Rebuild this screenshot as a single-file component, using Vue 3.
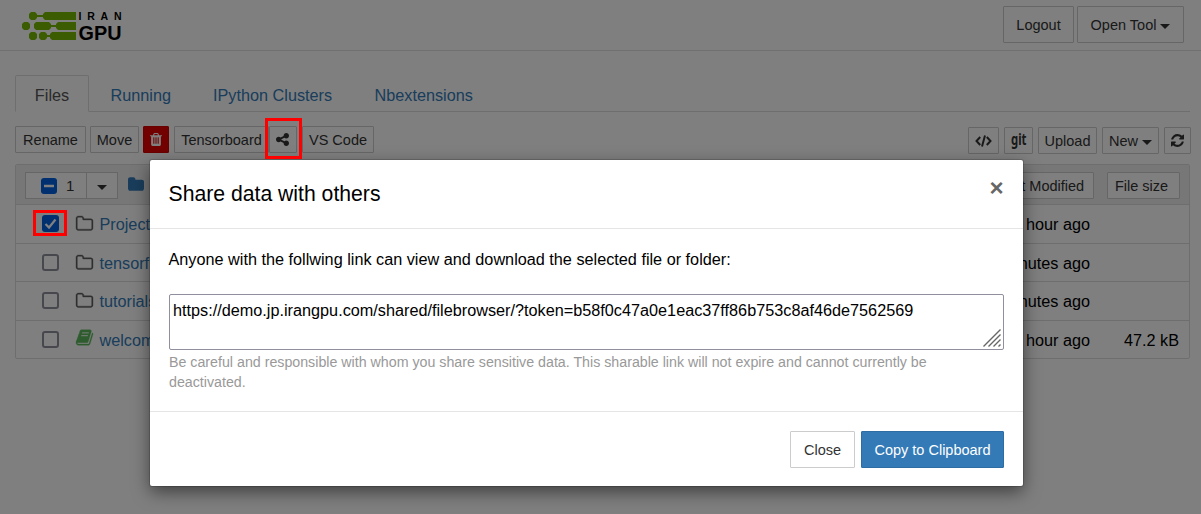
<script setup>
const tabs = ['Files', 'Running', 'IPython Clusters', 'Nbextensions']
const rows = [
  { name: 'Projects', type: 'folder', date: 'an hour ago', size: '', checked: true },
  { name: 'tensorflow', type: 'folder', date: '8 minutes ago', size: '', checked: false },
  { name: 'tutorials', type: 'folder', date: '8 minutes ago', size: '', checked: false },
  { name: 'welcome.ipynb', type: 'book', date: 'an hour ago', size: '47.2 kB', checked: false },
]
const link = 'https://demo.jp.irangpu.com/shared/filebrowser/?token=b58f0c47a0e1eac37ff86b753c8af46de7562569'
</script>

<template>
  <div class="page">
    <header class="top">
      <svg class="logo" width="100" height="30" viewBox="0 0 100 30">
        <g fill="#76b900">
          <path d="M9 0h4l2 2v4l-2 2H9L7 6V2zM23 0h31v8H23l-2-2V2zM2 10h4l2 2v4l-2 2H2l-2-2v-4zM14 10h13l2 2v4l-2 2H14l-2-2v-4zM36 10h18v8H36l-2-2v-4zM9 20h4l2 2v4l-2 2H9l-2-2v-4zM19 20h4l2 2v4l-2 2h-4l-2-2v-4zM30 20h24v8H30l-2-2v-4z" />
          <path d="M14 3h8v2h-8zM28 13h7v2h-7zM24 23h5v2h-5z" />
        </g>
        <text x="56.500" y="7.700" font-size="10.500" textLength="43" class="brand">IRAN</text>
        <text x="56.500" y="28" font-size="20.500" textLength="43" lengthAdjust="spacingAndGlyphs" class="brand">GPU</text>
      </svg>
      <div class="top-buttons">
        <button class="btn big logout">Logout</button>
        <button class="btn big tool">Open Tool<i class="caret"></i></button>
      </div>
    </header>

    <nav class="tabs">
      <a v-for="(t, i) in tabs" :key="t" :class="['tab', 't' + i]">{{ t }}</a>
    </nav>

    <div class="toolbar">
      <div class="left">
        <button class="btn rename">Rename</button>
        <button class="btn move">Move</button>
        <button class="btn danger">
          <svg width="12" height="13" viewBox="0 128 1408 1536"><path fill="#fff" d="M512 1376v-704q0-14-9-23t-23-9h-64q-14 0-23 9t-9 23v704q0 14 9 23t23 9h64q14 0 23-9t9-23zm256 0v-704q0-14-9-23t-23-9h-64q-14 0-23 9t-9 23v704q0 14 9 23t23 9h64q14 0 23-9t9-23zm256 0v-704q0-14-9-23t-23-9h-64q-14 0-23 9t-9 23v704q0 14 9 23t23 9h64q14 0 23-9t9-23zm-544-992h448l-48-117q-7-9-17-11h-317q-10 2-17 11zm928 32v64q0 14-9 23t-23 9h-96v948q0 83-47 143.500t-113 60.500h-832q-66 0-113-58.500t-47-141.500v-952h-96q-14 0-23-9t-9-23v-64q0-14 9-23t23-9h309l70-167q15-37 54-63t79-26h320q40 0 79 26t54 63l70 167h309q14 0 23 9t9 23z" /></svg>
        </button>
        <button class="btn tensor">Tensorboard</button>
        <button class="btn share">
          <svg width="13" height="13" viewBox="0 128 1536 1536"><path fill="#333" d="M1216 1024q133 0 226.500 93.500t93.500 226.500-93.500 226.500-226.500 93.500-226.500-93.500-93.500-226.500q0-12 2-34l-360-180q-92 86-218 86-133 0-226.500-93.500t-93.500-226.500 93.500-226.500 226.500-93.500q126 0 218 86l360-180q-2-22-2-34 0-133 93.500-226.500t226.500-93.500 226.500 93.500 93.500 226.500-93.500 226.500-226.500 93.500q-126 0-218-86l-360 180q2 22 2 34t-2 34l360 180q92-86 218-86z" /></svg>
        </button>
        <button class="btn vs">VS Code</button>
      </div>
      <div class="right">
        <button class="btn code">
          <svg width="17" height="14" viewBox="0 0 17 14" fill="none" stroke="#333" stroke-width="2"><path d="M5.200 3L1.500 7l3.700 4M11.800 3l3.700 4-3.700 4M10 1.500L7 12.500" /></svg>
        </button>
        <button class="btn git"><svg width="16" height="20" viewBox="0 0 16 20"><text x="0" y="14" textLength="15.500" lengthAdjust="spacingAndGlyphs">git</text></svg></button>
        <button class="btn upload">Upload</button>
        <button class="btn new">New<i class="caret"></i></button>
        <button class="btn refresh">
          <svg width="13" height="13" viewBox="0 128 1536 1536"><path fill="#333" d="M1511 1056q0 5-1 7-64 268-268 434.500t-478 166.500q-146 0-282.500-55t-243.500-157l-129 129q-19 19-45 19t-45-19-19-45v-448q0-26 19-45t45-19h448q26 0 45 19t19 45-19 45l-137 137q71 66 161 102t187 36q134 0 250-65t186-179q11-17 53-117 8-23 30-23h192q13 0 22.500 9.500t9.500 22.500zm25-800v448q0 26-19 45t-45 19h-448q-26 0-45-19t-19-45 19-45l138-138q-148-137-349-137-134 0-250 65t-186 179q-11 17-53 117-8 23-30 23h-199q-13 0-22.500-9.500t-9.500-22.500v-7q65-268 270-434.500t480-166.500q146 0 284 55.500t245 156.500l130-129q19-19 45-19t45 19 19 45z" /></svg>
        </button>
      </div>
    </div>

    <section class="list">
      <div class="list-head">
        <div class="select">
          <span class="select-main"><span class="check on"><svg width="16" height="16" viewBox="0 0 16 16"><path d="M3 8h10" stroke="#fff" stroke-width="2.500" /></svg></span><span>1</span></span>
          <span class="select-drop"><i class="caret"></i></span>
        </div>
        <svg class="crumb" width="16" height="14" viewBox="0 128 1664 1408"><path fill="#337ab7" d="M1664 608v704q0 92-66 158t-158 66h-1216q-92 0-158-66t-66-158v-960q0-92 66-158t158-66h320q92 0 158 66t66 158v32h672q92 0 158 66t66 158z" /></svg>
        <button class="btn modified">Last Modified</button>
        <button class="btn size">File size</button>
      </div>
      <div v-for="r in rows" :key="r.name" class="row">
        <span :class="['check', { on: r.checked }]">
          <svg v-if="r.checked" width="17" height="17" viewBox="0 0 17 17"><path d="M3.500 9l3.500 3.500 6.500-8" fill="none" stroke="#fff" stroke-width="2.200" /></svg>
        </span>
        <svg v-if="r.type === 'folder'" class="icon" width="17" height="14.500" viewBox="0 128 1664 1408"><path fill="#5e5e5e" stroke="#5e5e5e" stroke-width="35" d="M1536 1312v-704q0-40-28-68t-68-28h-704q-40 0-68-28t-28-68v-64q0-40-28-68t-68-28h-320q-40 0-68 28t-28 68v960q0 40 28 68t68 28h1216q40 0 68-28t28-68zm128-704v704q0 92-66 158t-158 66h-1216q-92 0-158-66t-66-158v-960q0-92 66-158t158-66h320q92 0 158 66t66 158v32h672q92 0 158 66t66 158z" /></svg>
        <svg v-else class="icon book" width="17" height="17" viewBox="0 128 1664 1536"><path fill="#5cb85c" stroke="#5cb85c" stroke-width="30" d="M1639 478q40 57 18 129l-275 906q-19 64-76.500 107.500t-122.500 43.500h-923q-77 0-148.500-53.500t-99.500-131.500q-24-67-2-127 0-4 3-27t4-37q1-8-3-21.500t-3-19.500q2-11 8-21t16.500-23.500 16.500-23.500q23-38 45-91.500t30-91.500q3-10 .5-30t-.5-28q3-11 17-28t17-23q21-36 42-92t25-90q1-9-2.500-32t.5-28q4-13 22-30.500t22-22.500q19-26 42.500-84.500t27.500-96.500q1-8-3-25.500t-2-26.500q2-8 9-18t18-23 17-21q8-12 16.500-30.500t15-35 16-36 19.500-32 26.500-23.500 36-11.500 47.500 5.500l-1 3q38-9 51-9h761q74 0 114 56t18 130l-274 906q-36 119-71.500 153.500t-128.500 34.500h-869q-27 0-38 15-11 16-1 43 24 70 144 70h923q29 0 56-15.500t35-41.500l300-987q7-22 5-57 38 15 59 43zm-1064 2q-4 13 2 22.500t20 9.500h608q13 0 25.500-9.500t16.500-22.500l21-64q4-13-2-22.500t-20-9.500h-608q-13 0-25.500 9.500t-16.500 22.500zm-83 256q-4 13 2 22.500t20 9.500h608q13 0 25.500-9.500t16.500-22.500l21-64q4-13-2-22.500t-20-9.500h-608q-13 0-25.500 9.500t-16.500 22.500z" /></svg>
        <a class="name">{{ r.name }}</a>
        <span class="date">{{ r.date }}</span>
        <span class="bytes">{{ r.size }}</span>
      </div>
    </section>

    <div class="backdrop"></div>

    <div class="modal">
      <div class="modal-head">
        <h4>Share data with others</h4>
        <span class="close">×</span>
      </div>
      <div class="modal-body">
        <p class="intro">Anyone with the follwing link can view and download the selected file or folder:</p>
        <div class="field">
          <span class="url">{{ link }}</span>
          <svg class="grip" width="18" height="18" viewBox="0 0 18 18" stroke="#666" stroke-width="1.400"><path d="M0.500 17.500L17.500 0.500M5.500 17.500L17.500 5.500M10.500 17.500L17.500 10.500M15.500 17.500L17.500 15.500" /></svg>
        </div>
        <p class="help">Be careful and responsible with whom you share sensitive data. This sharable link will not expire and cannot currently be deactivated.</p>
      </div>
      <div class="modal-foot">
        <button class="btn big close-btn">Close</button>
        <button class="btn big primary">Copy to Clipboard</button>
      </div>
    </div>

    <div class="mark mark-row"></div>
    <div class="mark mark-share"></div>
  </div>
</template>

<style>
body { margin: 0; background: #fff; overflow: hidden; }
</style>

<style scoped>
* { box-sizing: border-box; }
.page { position: relative; width: 1201px; height: 514px; overflow: hidden; background: #fff; font: 16.240px/23px "Liberation Sans", Arial, sans-serif; color: #000; }
.top { display: flex; justify-content: space-between; height: 51px; border-bottom: 1px solid #e0e0e0; padding: 6px 17px 0 22px; }
.logo { margin-top: 6px; overflow: visible; }
.brand { font-family: "Liberation Sans", sans-serif; font-weight: bold; fill: #000; }
.top-buttons { display: flex; gap: 3px; }
.btn { display: flex; align-items: center; justify-content: center; height: 27px; padding: 0; border: 1px solid #ccc; border-radius: 1px; background: #fff; color: #333; font: 14.500px/22px "Liberation Sans", Arial, sans-serif; white-space: nowrap; flex: none; }
.big { height: 37px; }
.logout { width: 71px; }
.tool { width: 107px; }
.caret { width: 0; height: 0; border: 5px solid transparent; border-top-color: #333; border-bottom: 0; margin-left: 4px; margin-top: 3px; }
.tabs { display: flex; margin: 24px 11px 0 15px; height: 37px; border-bottom: 1px solid #ddd; }
.tab { height: 37px; padding-top: 9px; color: #337ab7; white-space: nowrap; }
.t0 { width: 74px; text-align: center; color: #555; background: #fff; border: 1px solid #ddd; border-bottom-color: #fff; border-radius: 2px 2px 0 0; padding-top: 8px; }
.t1 { margin-left: 21.500px; width: 102.500px; }
.t2 { width: 161.500px; }
.toolbar { display: flex; justify-content: space-between; height: 52px; padding: 14px 10px 0 15px; }
.left, .right { display: flex; }
.right { margin-top: 1px; gap: 5px; }
.rename { width: 71px; margin-right: 4px; }
.move { width: 49px; margin-right: 4px; }
.danger { width: 26px; margin-right: 5px; background: #e60000; border-color: #d40000; }
.tensor { width: 95px; }
.share { width: 28px; margin-right: 5px; padding-right: 1px; }
.vs { width: 72px; }
.code { width: 31px; }
.git { width: 29px; }
.git text { font: bold 15.500px "Noto Sans", "Open Sans", sans-serif; fill: #333; }
.upload { width: 59px; }
.new { width: 57px; }
.refresh { width: 27px; }
.list { width: 1175px; height: 195px; margin-left: 15px; border: 1px solid #ddd; border-radius: 2px; }
.list-head { display: flex; height: 39px; padding: 7px 9px 0; background: #eee; }
.select { display: flex; width: 93px; height: 27px; border: 1px solid #ccc; background: #fff; color: #333; font-size: 15px; }
.select-main { display: flex; align-items: center; gap: 9px; width: 61px; padding-left: 15px; border-right: 1px solid #ccc; }
.select-drop { display: flex; align-items: center; justify-content: center; width: 30px; }
.select-drop .caret { margin-left: 0; }
.crumb { margin: 5px auto 0 10px; }
.modified { width: 104px; margin-right: 13px; padding-right: 2px; }
.size { width: 73px; padding-right: 4px; }
.row { display: flex; align-items: center; height: 38.600px; border-top: 1px solid #ddd; padding: 0 10px 0 26px; }
.check { display: block; width: 17px; height: 17px; border: 2px solid #8f8f9d; border-radius: 3px; background: #fff; flex: none; }
.check.on { border: 0; background: #0060df; }
.check svg { display: block; }
.select .check { width: 16px; height: 16px; }
.icon { margin: -1px 6.500px 0 17px; flex: none; overflow: visible; }
.book { margin-top: -4px; }
.name { color: #337ab7; padding-top: 1.500px; }
.date { margin-left: auto; padding-top: 1.500px; }
.bytes { width: 89px; text-align: right; padding-top: 1.500px; }
.backdrop { position: absolute; inset: 0; background: rgba(0, 0, 0, .5); }
.modal { position: absolute; left: 150px; top: 160px; width: 873px; height: 326px; background: #fff; border-radius: 2px; box-shadow: 0 6px 17px rgba(0, 0, 0, .5), 0 0 0 1px rgba(0, 0, 0, .15); }
.modal-head { display: flex; justify-content: space-between; height: 69px; border-bottom: 1px solid #e5e5e5; padding: 20px 19.500px 0 18.500px; }
h4 { margin: 0; font-size: 21.200px; line-height: 28px; font-weight: normal; }
.close { font-size: 24.150px; line-height: 16px; font-weight: bold; color: #666; }
.modal-body { height: 182px; padding: 19px 19px 0; }
.intro { margin: 0 0 23px -0.500px; line-height: 23px; white-space: nowrap; }
.field { position: relative; height: 56px; border: 1px solid #8f8f9d; border-radius: 2px; padding: 3px 3px 0; }
.url { display: block; white-space: nowrap; line-height: 24px; }
.grip { position: absolute; right: 2px; bottom: 2px; }
.help { margin: 2px 0 0; font-size: 14.230px; line-height: 20px; color: #999; }
.modal-foot { display: flex; justify-content: flex-end; gap: 6px; height: 75px; border-top: 1px solid #e5e5e5; padding: 19px 19px 0; }
.close-btn { width: 65px; }
.primary { width: 143px; background: #337ab7; border-color: #2e6da4; color: #fff; }
.mark { position: absolute; border: 3px solid #f00; }
.mark-row { left: 33px; top: 210px; width: 34px; height: 26px; }
.mark-share { left: 265px; top: 118px; width: 37px; height: 41px; }
</style>
